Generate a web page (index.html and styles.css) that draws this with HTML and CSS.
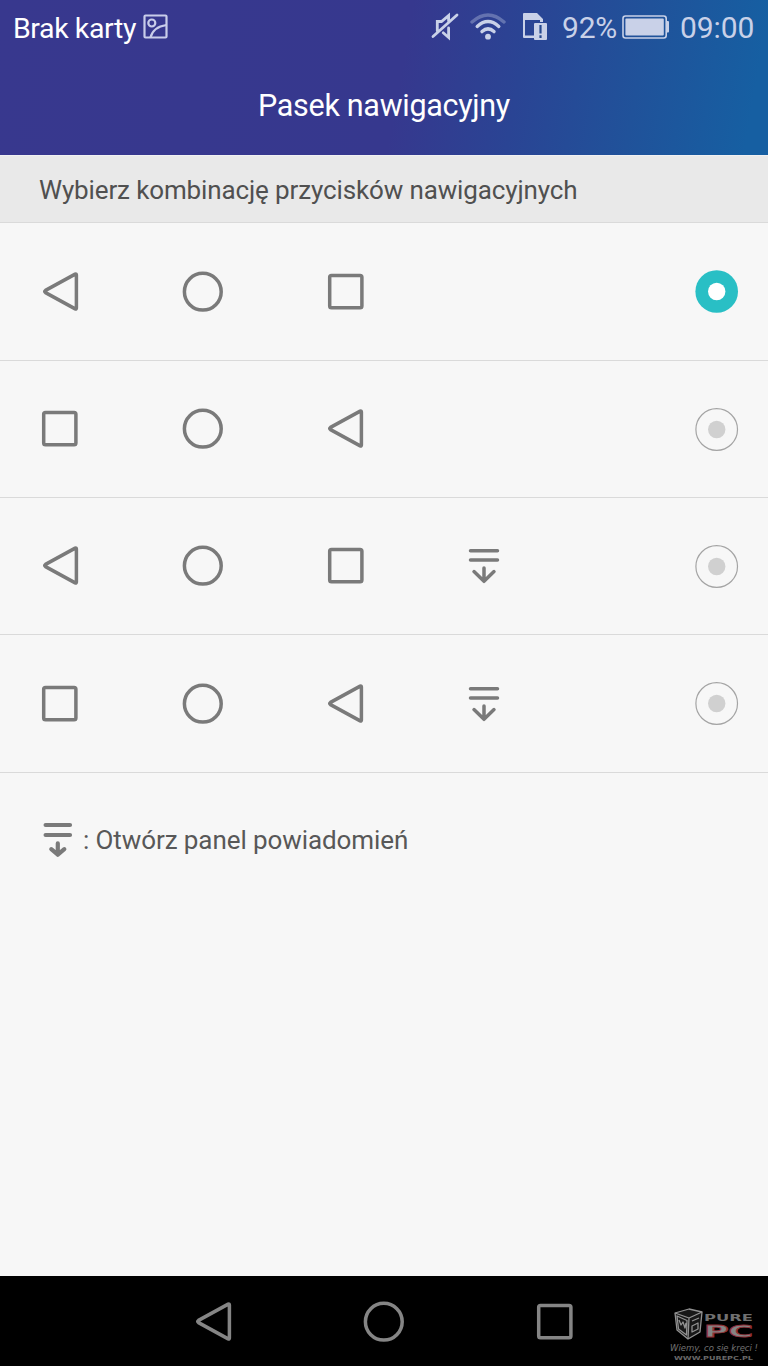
FILE: index.html
```html
<!DOCTYPE html>
<html lang="pl">
<head>
<meta charset="utf-8">
<title>Pasek nawigacyjny</title>
<link rel="stylesheet" href="styles.css">
</head>
<body>
<svg class="defs" aria-hidden="true">
  <symbol id="back" viewBox="0 0 44 44"><path d="M37.2 4.1 7.5 20.4q-1.6 1.1 0 2.2L37.2 38.9q1.2.5 1.2-1V5.1q0-1.5-1.2-1z"/></symbol>
  <symbol id="home" viewBox="0 0 44 44"><circle cx="21.8" cy="21.7" r="18.4"/></symbol>
  <symbol id="recent" viewBox="0 0 44 44"><rect x="5.7" y="5.5" width="32.2" height="32.2" rx="1.8"/></symbol>
  <symbol id="panel" viewBox="0 0 44 44"><path d="M8.5 6.7H35.5M8.5 16H35.5M22 24V37.3M12 27.6 22 37.3 32 27.6"/></symbol>
</svg>
<div class="screen">
  <header class="header">
    <div class="status">
      <span class="carrier">Brak karty</span>
      <svg class="picture" width="26" height="26" viewBox="0 0 26 26"><rect x="1.5" y="1.5" width="22" height="22" rx="1"/><circle cx="8.8" cy="9" r="3.5"/><path d="M7.5 23.5Q10 13 23.5 11"/></svg>
      <svg class="muted" width="28" height="30" viewBox="0 0 28 30"><path class="line" d="M6.3 19V9.5H10.5L17.6 3.6V9M17.6 16V25.5L12.2 20.8M2 24.5 26 3"/></svg>
      <svg class="wifi" width="36" height="30" viewBox="0 0 36 30"><path class="line faint" d="M2 10Q18-4 34 10"/><path class="line" d="M7.2 14.4Q18 4.6 28.8 14.4M12 19.6Q18 14.2 24 19.6"/><circle class="solid" cx="18" cy="24.7" r="2.9"/></svg>
      <svg class="sim" width="26" height="30" viewBox="0 0 26 30"><path class="solid" fill-rule="evenodd" d="M2 1H15L21 7V10H18V8H3V23.5H12V26H2Q1 26 1 25V2Q1 1 2 1z"/><rect class="solid" x="12" y="11" width="13" height="17" rx="1"/><path class="mark" d="M18.5 13V21.5M18.5 23.2V26"/></svg>
      <span class="percent">92%</span>
      <svg class="battery" width="48" height="26" viewBox="0 0 48 26"><rect class="outline" x="1" y="2" width="43.2" height="22" rx="2.5"/><rect class="solid" x="3.4" y="4.4" width="38.4" height="17.2" rx="1"/><path class="solid" d="M44.5 7h1.5q1 0 1 1v9.5q0 1-1 1H44.5z"/></svg>
      <span class="clock">09:00</span>
    </div>
    <h1 class="title">Pasek nawigacyjny</h1>
  </header>
  <h2 class="subtitle">Wybierz kombinację przycisków nawigacyjnych</h2>
  <main class="options">
    <div class="option"><svg class="key"><use href="#back"/></svg><svg class="key"><use href="#home"/></svg><svg class="key"><use href="#recent"/></svg><span></span><svg class="radio checked"><circle class="ring" cx="21.7" cy="21.5" r="21.3"/><circle class="dot" cx="21.7" cy="21.5" r="8.7"/></svg></div>
    <div class="option"><svg class="key"><use href="#recent"/></svg><svg class="key"><use href="#home"/></svg><svg class="key trailing"><use href="#back"/></svg><span></span><svg class="radio"><circle class="ring" cx="21.7" cy="21.5" r="20.8"/><circle class="dot" cx="21.7" cy="21.5" r="8.7"/></svg></div>
    <div class="option"><svg class="key"><use href="#back"/></svg><svg class="key"><use href="#home"/></svg><svg class="key"><use href="#recent"/></svg><svg class="key"><use href="#panel"/></svg><svg class="radio"><circle class="ring" cx="21.7" cy="21.5" r="20.8"/><circle class="dot" cx="21.7" cy="21.5" r="8.7"/></svg></div>
    <div class="option"><svg class="key"><use href="#recent"/></svg><svg class="key"><use href="#home"/></svg><svg class="key trailing"><use href="#back"/></svg><svg class="key"><use href="#panel"/></svg><svg class="radio"><circle class="ring" cx="21.7" cy="21.5" r="20.8"/><circle class="dot" cx="21.7" cy="21.5" r="8.7"/></svg></div>
  </main>
  <div class="legend">
    <svg class="legend-icon" width="30" height="38" viewBox="0 0 30 38"><path d="M2.6 4H27M2.6 14H27M14.8 22.4V33.7M8.3 28.2 14.8 33.7 21.3 28.2"/></svg>
    <span class="legend-text">: Otwórz panel powiadomień</span>
  </div>
  <nav class="navbar">
    <svg class="key"><use href="#back"/></svg><svg class="key"><use href="#home"/></svg><svg class="key"><use href="#recent"/></svg>
    <svg class="brand" width="98" height="64" viewBox="0 0 98 64">
      <g class="box"><path class="case" d="M6 11 20 7 33 10 31 30 19 37 8 28z"/><path d="M6 11 20 16 33 10M20 16 19 37M8 14 18 18.500 17.500 33 9.500 27zM10 18l2 5 2-3 2 6 1-5M23 19l7-3M23 24l6-3V27l-6 3z"/></g>
      <text class="pure" x="35" y="19" textLength="49" lengthAdjust="spacingAndGlyphs">PURE</text>
      <text class="pc" x="35" y="34.5" textLength="49" lengthAdjust="spacingAndGlyphs">PC</text>
      <text class="motto" x="1" y="48.500" textLength="88" lengthAdjust="spacingAndGlyphs">Wiemy, co się kręci !</text>
      <text class="site" x="5" y="58" textLength="79" lengthAdjust="spacingAndGlyphs">WWW.PUREPC.PL</text>
    </svg>
  </nav>
</div>
</body>
</html>
```
FILE: styles.css
```css
* { box-sizing: border-box; }
body { margin: 0; font-family: Roboto, sans-serif; background: #f7f7f7; }
svg { display: block; flex: none; fill: none; }
.defs { position: absolute; width: 0; height: 0; }
.screen { width: 768px; height: 1366px; display: flex; flex-direction: column; overflow: hidden; }
.header { height: 155px; flex: none; background: linear-gradient(100deg, #38388e 0%, #36388e 52%, #2a4494 67%, #20529a 82%, #165fa2 97%); }
.status { height: 56px; display: flex; align-items: center; padding-left: 13px; white-space: nowrap; color: #c9d1e8; }
.carrier { width: 130px; font-size: 28.5px; letter-spacing: -.4px; color: #fff; }
.picture { stroke: #c9cdea; stroke-width: 2.2; margin-top: -3px; }
.muted { margin: -2px 0 0 262px; }
.wifi { margin: -2px 0 0 11px; }
.sim { margin: -2px 0 0 16px; }
.percent { width: 60px; margin: -2px 0 0 14px; font-size: 30px; letter-spacing: -.2px; }
.battery { margin: -2px 0 0 0; }
.clock { margin: -2px 0 0 10px; font-size: 30px; letter-spacing: -.1px; }
.line { stroke: #c9d1e8; stroke-width: 2.8; stroke-linecap: round; }
.wifi .line { stroke-width: 3.4; }
.wifi .faint { opacity: .35; }
.solid { fill: #c9d1e8; }
.mark { stroke: #27498f; stroke-width: 2.2; }
.outline { stroke: #c9d1e8; stroke-width: 1.6; }
.title { margin: 0; text-align: center; color: #fff; font-size: 30.5px; letter-spacing: -.3px; font-weight: 400; line-height: 36px; padding-top: 32px; }
.subtitle { flex: none; height: 68px; margin: 0; padding-left: 39px; font-size: 26px; letter-spacing: -.13px; font-weight: 400; line-height: 68px; color: #505050; background: #e9e9e9; border-top: 1px solid #f0f0f2; border-bottom: 1px solid #dadada; }
.options { display: grid; grid-template-rows: 138px 137px 137px 138px; }
.option { display: grid; grid-template-columns: 143px 143px 138px 233px 44px; align-items: center; padding-left: 38px; border-bottom: 1px solid #dadada; }
.key { width: 44px; height: 44px; stroke: #7a7a7a; stroke-width: 3.5; stroke-linecap: round; stroke-linejoin: round; }
.trailing { margin-left: -1.5px; }
.radio { width: 44px; height: 43px; }
.ring { stroke: #a4a4a4; stroke-width: 1.2; }
.dot { fill: #d0d0d0; }
.checked .ring { fill: #29bfc5; stroke: none; }
.checked .dot { fill: #fff; }
.legend { display: flex; align-items: center; height: 134px; padding-left: 43px; }
.legend-icon { stroke: #7a7a7a; stroke-width: 4.2; stroke-linecap: round; stroke-linejoin: round; }
.legend-text { margin-left: 10px; font-size: 26px; letter-spacing: -.09px; color: #585858; }
.navbar { margin-top: auto; height: 90px; display: grid; grid-template-columns: 171px 171px 136px 98px; align-items: center; padding-left: 191px; background: #000; }
.navbar .key { stroke: #858585; margin-top: 1px; }
.brand { margin-top: 26px; overflow: visible; }
.box { stroke: #929292; stroke-width: 1.3; stroke-linejoin: round; }
.case { fill: #181818; }
.pure { font: bold 8px "DejaVu Sans", sans-serif; fill: #707070; }
.pc { font: bold 16px "DejaVu Sans", sans-serif; fill: #858585; stroke: #922f38; stroke-width: .8; }
.motto { font: italic 9px "DejaVu Sans", sans-serif; fill: #737373; }
.site { font: bold 5.5px "DejaVu Sans", sans-serif; fill: #686868; }
```
